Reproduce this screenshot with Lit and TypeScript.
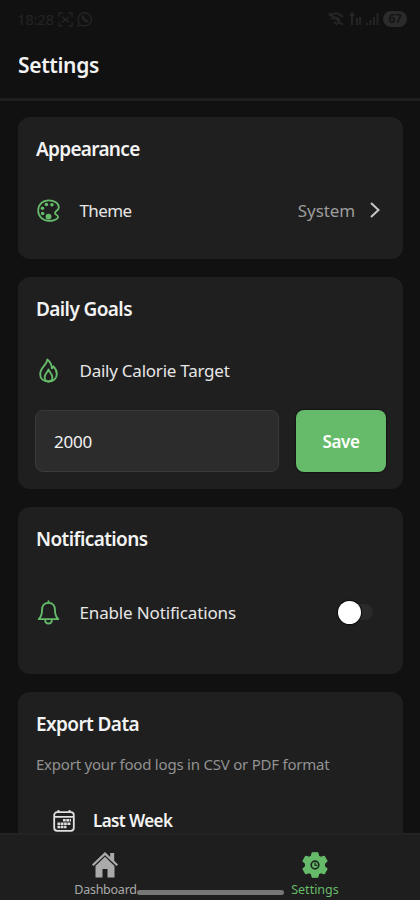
import { LitElement, html, css, svg } from "lit";
import { customElement, property } from "lit/decorators.js";

const palette = svg`<path d="M12.200 2.200C6.500 2.200 2.100 6.400 2.100 12.100S6.500 21.900 12.400 21.900c1.800 0 3-.1 4.500-.5 2.300-.6 4.300-1.700 4.300-3.300 0-1.700-3-1.800-3-3.700 0-1.800 3.700-2.700 3.700-5.400 0-4.200-4.500-6.800-9.700-6.800Z" fill="none" stroke="currentColor" stroke-width="1.700"/><g fill="currentColor"><circle cx="10" cy="6.200" r="1.700"/><circle cx="15.300" cy="6.500" r="1.700"/><circle cx="6.200" cy="9.800" r="1.700"/><circle cx="6.400" cy="14.800" r="1.700"/><circle cx="12" cy="17.800" r="2.800"/></g>`;
const flame = svg`<path d="M10.800 1.500C11 6 4 9 4 15.500 4 20 7.500 22.500 12 22.500s8-2.700 8-7.200c0-3-1.300-5.300-3.300-7.300-.5 1-.8 1.500-1.500 1.900C15 6.500 13.500 3.500 10.800 1.500Z"/><path d="M12 11c-.5 2.500-3.700 4.200-3.700 7.500 0 2.300 1.500 4 3.700 4s3.700-1.700 3.700-4c0-3.300-3.200-5-3.700-7.500Z"/>`;
const bell = svg`<path d="M12 1.200v1.600M12 2.700c-4.200 0-6.200 3-6.200 6.800 0 5-.9 6.500-3.200 8.900h18.800c-2.300-2.400-3.200-3.900-3.200-8.900 0-3.800-2-6.800-6.200-6.800ZM8.800 18.600c0 2.500 1.300 4 3.200 4s3.200-1.500 3.200-4"/>`;

@customElement("settings-row")
class SettingsRow extends LitElement {
  @property() label = "";
  @property() icon = "";
  static styles = css`
    :host { display: flex; align-items: center; height: 26px; color: #e6e6e6; }
    .icon { width: 25px; height: 25px; color: #66bb6a; flex: none; }
    .label { flex: 1; margin-left: 18.500px; font-size: 17px; letter-spacing: var(--row-spacing, -0.24px); white-space: nowrap; }
  `;
  render() {
    const filled = this.icon === "palette";
    return html`
      <svg class="icon" viewBox="0 0 24 24" fill="none" stroke=${filled ? "none" : "currentColor"} stroke-width="1.8" stroke-linejoin="round" stroke-linecap="round">
        ${filled ? palette : this.icon === "flame" ? flame : bell}
      </svg>
      <span class="label">${this.label}</span>
      <slot></slot>
    `;
  }
}

@customElement("app-root")
class AppRoot extends LitElement {
  static styles = css`
    * { box-sizing: border-box; }
    :host { display: flex; flex-direction: column; height: 900px; position: relative; overflow: hidden; background: #111; color: #f3f3f3; font-family: "Noto Sans", "Open Sans", sans-serif; }
    .status { height: 38px; padding: 0 13px 0 17px; display: flex; align-items: center; justify-content: space-between; color: #242424; font-size: 15px; letter-spacing: -0.3px; flex: none; }
    .group { display: flex; align-items: center; gap: 4px; }
    .battery { width: 24px; height: 16px; border-radius: 8px; background: #2b2b2b; color: #161616; font-size: 12px; line-height: 16px; text-align: center; font-weight: 700; }
    header { height: 63px; padding: 12px 18px 0; border-bottom: 3px solid #1f1f1f; flex: none; }
    h1 { margin: 0; font-size: 21px; line-height: 30px; font-weight: 600; letter-spacing: -0.35px; }
    main { flex: 1; min-height: 0; overflow: hidden; padding: 16px 17px 0 18px; display: flex; flex-direction: column; gap: 18px; }
    .card { background: #1f1f1f; border-radius: 12px; padding: 17px 17px 0 18px; flex: none; }
    .appearance { height: 142px; --row-spacing: -0.6px; }
    .goals { height: 212px; }
    .notifications { height: 167px; --row-spacing: -0.15px; }
    .export { height: 240px; }
    h2 { margin: 0; font-size: 19px; line-height: 30px; font-weight: 600; letter-spacing: -0.6px; }
    .appearance h2 { letter-spacing: -0.7px; }
    .row { margin-top: 33px; }
    .tall { margin-top: 45px; }
    .value { color: #9c9c9c; font-size: 17px; letter-spacing: -0.1px; margin-right: 14px; }
    .chevron { width: 12px; height: 18px; margin-right: 5px; }
    .form { display: flex; gap: 17px; margin-top: 27px; margin-left: -1px; }
    .input { flex: 1; height: 62px; border: 1.500px solid #3a3a3a; border-radius: 8px; background: #2c2c2c; padding-left: 18px; font-size: 17px; line-height: 61px; letter-spacing: -0.2px; }
    .save { width: 90px; height: 62px; border: 0; padding: 0; border-radius: 8px; background: #66bb6a; color: #fff; font: 600 17px "Noto Sans", sans-serif; letter-spacing: -0.35px; box-shadow: 0 0 1px 1px #151515; }
    .switch { width: 36px; height: 16px; margin-right: 13px; display: flex; align-items: center; background: #2a2a2a; border-radius: 8px; }
    .knob { width: 23px; height: 23px; border-radius: 50%; background: #fff; box-shadow: 0 0 1px 1px #0c0c0c; flex: none; margin-left: 0.500px; }
    .hint { margin: 13px 0 0; color: #929292; font-size: 15px; line-height: 24px; letter-spacing: -0.22px; white-space: nowrap; }
    .option { display: flex; align-items: center; gap: 18px; margin: 32px 0 0 17px; font-size: 17px; line-height: 26px; font-weight: 600; letter-spacing: -0.6px; }
    .calendar { width: 22px; height: 22px; }
    nav { height: 67px; border-top: 2px solid #232323; background: #1e1e1e; flex: none; display: grid; grid-template-columns: 1fr 1fr; position: relative; }
    .tab { display: flex; flex-direction: column; align-items: center; padding-top: 16px; color: #aaa; font-size: 12.500px; line-height: 16px; }
    .tab svg { width: 28px; height: 28px; flex: none; }
    .tab span { margin-top: 3px; }
    .active { color: #66bb6a; }
    .home-label { letter-spacing: -0.25px; margin-left: 1px; }
    .gesture { position: absolute; left: 137px; bottom: 5px; width: 147px; height: 5px; border-radius: 3px; background: #777; }
  `;
  render() {
    return html`
      <div class="status">
        <div class="group">
          <span>18:28</span>
          <svg width="15" height="15" viewBox="0 0 16 16" fill="none" stroke="currentColor" stroke-width="1.500"><path d="M1 5V1h4M11 1h4v4M15 11v4h-4M5 15H1v-4M4 5l8 6M12 5l-8 6"/></svg>
          <svg width="15" height="15" viewBox="0 0 16 16" fill="none" stroke="currentColor" stroke-width="1.500"><path d="M1 15l1-4a7 7 0 1 1 3 3ZM5.500 5c0 3 2.500 5.500 5.500 5.500l.5-1.500-2-1-1 1-2-2 1-1-1-2Z"/></svg>
        </div>
        <div class="group">
          <svg width="17" height="14" viewBox="0 0 17 14" fill="none" stroke="currentColor" stroke-width="2"><path d="M1 4c5-4 10-3 14 1M3 7c3-2 6-2 9 1M6 10l3 2 3-2M1 1l14 12"/></svg>
          <svg width="13" height="14" viewBox="0 0 13 14" fill="none" stroke="currentColor" stroke-width="2"><path d="M3 13V1L1 4M3 1l2 3M8 6v7M11 5v8"/></svg>
          <svg width="13" height="14" viewBox="0 0 13 14" fill="currentColor"><path d="M0 11h2v2H0zM3.500 8h2v5h-2zM7 5h2v8H7zM10.500 1h2v12h-2z"/></svg>
          <div class="battery">67</div>
        </div>
      </div>
      <header><h1>Settings</h1></header>
      <main>
        <section class="card appearance">
          <h2>Appearance</h2>
          <settings-row class="row" icon="palette" label="Theme">
            <span class="value">System</span>
            <svg class="chevron" viewBox="0 0 12 18" fill="none" stroke="#c8c8c8" stroke-width="2"><path d="M2 2l7.500 7L2 16"/></svg>
          </settings-row>
        </section>
        <section class="card goals">
          <h2>Daily Goals</h2>
          <settings-row class="row" icon="flame" label="Daily Calorie Target"></settings-row>
          <div class="form"><div class="input">2000</div><button class="save">Save</button></div>
        </section>
        <section class="card notifications">
          <h2>Notifications</h2>
          <settings-row class="tall" icon="bell" label="Enable Notifications">
            <div class="switch"><div class="knob"></div></div>
          </settings-row>
        </section>
        <section class="card export">
          <h2>Export Data</h2>
          <p class="hint">Export your food logs in CSV or PDF format</p>
          <div class="option">
            <svg class="calendar" viewBox="0 0 22 22" fill="none" stroke="#e0e0e0" stroke-width="1.800"><rect x="1.200" y="2.200" width="19.600" height="18.600" rx="3"/><path d="M1.500 6.800h19M5.500 0v3M16.500 0v3"/><path d="M10 10.300h8M4.500 13.700h13.500M4.500 17h9" stroke-width="2.500" stroke-dasharray="2.700 .6"/></svg>
            <span>Last Week</span>
          </div>
        </section>
      </main>
      <nav>
        <div class="tab">
          <svg viewBox="0 0 28 28" fill="currentColor"><path d="M14 1 1 13.500l1.500 1.600L14 4.200l11.500 10.900 1.500-1.600-3.800-3.700V2h-4v4Z"/><path d="M14 5.800 4.500 15v11.500h7V18h5v8.500h7V15Z"/></svg>
          <span class="home-label">Dashboard</span>
        </div>
        <div class="tab active">
          <svg viewBox="0 0 28 28" fill="currentColor" stroke-linejoin="round"><path stroke="currentColor" stroke-width="1.200" d="M11.200 1.800h5.600l.8 3.400 2.200 1.200 3.500-1.100 2.700 4.700-2.600 2.500v3l2.600 2.500-2.700 4.700-3.500-1.100-2.200 1.200-.8 3.400h-5.600l-.8-3.400-2.200-1.200-3.500 1.100L2 18l2.600-2.500v-3L2 10l2.700-4.700 3.500 1.100 2.200-1.200Z"/><circle cx="14" cy="14" r="3.800" fill="none" stroke="#1e2a1f" stroke-width="1.700"/><path d="M14 11.500v2.800h2.300" fill="none" stroke="#1e2a1f" stroke-width="1.200"/></svg>
          <span>Settings</span>
        </div>
        <div class="gesture"></div>
      </nav>
    `;
  }
}
